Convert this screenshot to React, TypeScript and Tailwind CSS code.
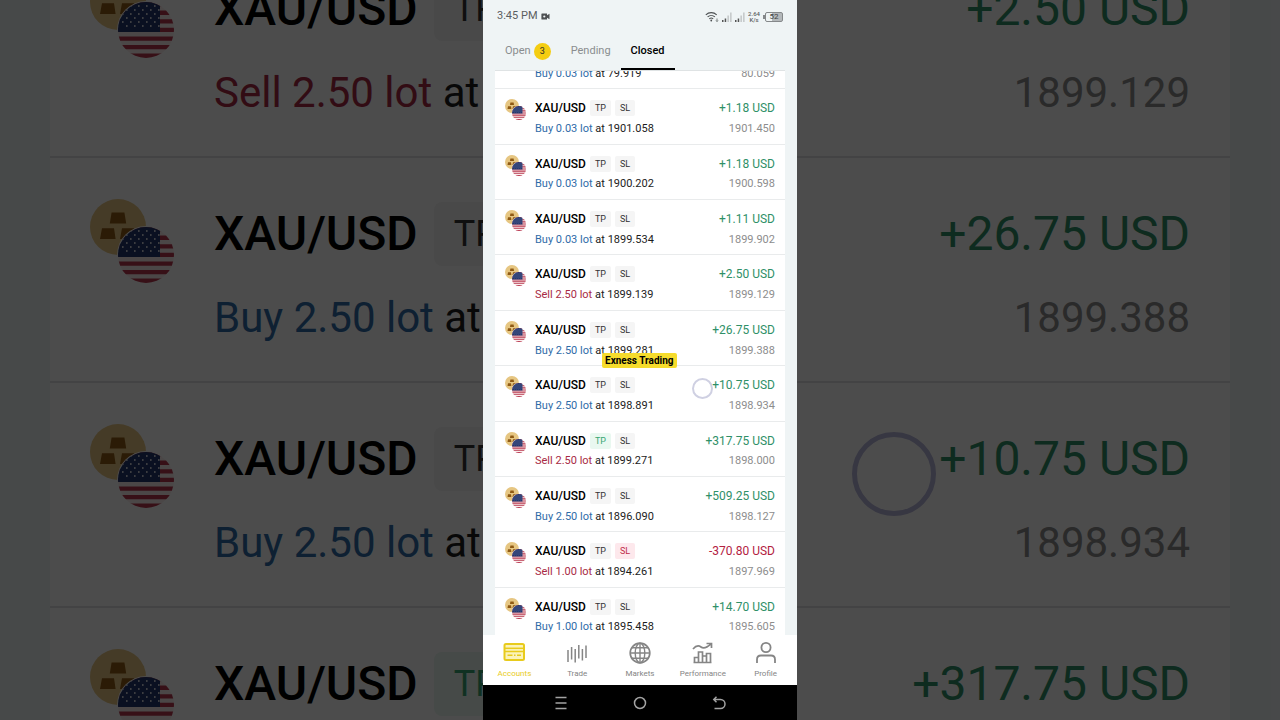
import clsx from 'clsx';

type Side = 'Buy' | 'Sell';

interface Trade {
  pair: string;
  side: Side;
  lot: string;
  open: string;
  close: string;
  profit: string;
  hit?: 'TP' | 'SL';
}

const trades: Trade[] = [
  { pair: 'XAG/USD', side: 'Buy', lot: '0.03', open: '79.919', close: '80.059', profit: '+0.42' },
  { pair: 'XAU/USD', side: 'Buy', lot: '0.03', open: '1901.058', close: '1901.450', profit: '+1.18' },
  { pair: 'XAU/USD', side: 'Buy', lot: '0.03', open: '1900.202', close: '1900.598', profit: '+1.18' },
  { pair: 'XAU/USD', side: 'Buy', lot: '0.03', open: '1899.534', close: '1899.902', profit: '+1.11' },
  { pair: 'XAU/USD', side: 'Sell', lot: '2.50', open: '1899.139', close: '1899.129', profit: '+2.50' },
  { pair: 'XAU/USD', side: 'Buy', lot: '2.50', open: '1899.281', close: '1899.388', profit: '+26.75' },
  { pair: 'XAU/USD', side: 'Buy', lot: '2.50', open: '1898.891', close: '1898.934', profit: '+10.75' },
  { pair: 'XAU/USD', side: 'Sell', lot: '2.50', open: '1899.271', close: '1898.000', profit: '+317.75', hit: 'TP' },
  { pair: 'XAU/USD', side: 'Buy', lot: '2.50', open: '1896.090', close: '1898.127', profit: '+509.25' },
  { pair: 'XAU/USD', side: 'Sell', lot: '1.00', open: '1894.261', close: '1897.969', profit: '-370.80', hit: 'SL' },
  { pair: 'XAU/USD', side: 'Buy', lot: '1.00', open: '1895.458', close: '1895.605', profit: '+14.70' },
];

const sideColor = (side: Side) => (side === 'Buy' ? 'text-[#2f6ba8]' : 'text-[#a82a44]');
const profitColor = (profit: string) => (profit.startsWith('-') ? 'text-[#b3213f]' : 'text-[#2f9068]');

const tagColor = (tag: 'TP' | 'SL', hit?: string) => {
  if (tag !== hit) return 'bg-[#f5f5f5] text-[#333333]';
  return tag === 'TP' ? 'bg-[#e9f8f0] text-[#37a673]' : 'bg-[#fde8ec] text-[#c02c4a]';
};

const PairIcon = ({ className }: { className?: string }) => (
  <svg viewBox="0 0 42 42" className={className} aria-hidden="true">
    <defs>
      <clipPath id="flag-circle">
        <circle cx="28" cy="28" r="14" />
      </clipPath>
    </defs>
    <circle cx="14" cy="14" r="14" fill="#e6c682" />
    <path d="M10.8 6.800h6.400l.9 5.400h-8.200zM6 14.600h6l.8 5.400H5zM16 14.600h6l1 5.400h-8z" fill="#8f5a14" />
    <circle cx="28" cy="28" r="14.5" fill="#fff" />
    <g clipPath="url(#flag-circle)">
      <path d="M14 14h28v28H14z" fill="#fbeeee" />
      <path
        d="M14 14h28v2.15H14zM14 18.3h28v2.15H14zM14 22.6h28v2.15H14zM14 26.9h28v2.15H14zM14 31.2h28v2.15H14zM14 35.5h28v2.15H14zM14 39.8h28V42H14z"
        fill="#b8384f"
      />
      <path d="M14 14h21v15H14z" fill="#24386f" />
      <path
        d="M16 16h19M18 18h17M16 20h19M18 22h17M16 24h19M18 26h17"
        stroke="#fff"
        strokeWidth="0.8"
        strokeDasharray="0.8 3.2"
      />
    </g>
  </svg>
);

const TradeRow = ({ trade }: { trade: Trade }) => (
  <li className="flex items-start gap-[9px] border-b border-[#e9ebec] px-[10px] pt-[10px]">
    <PairIcon className="size-[21px] shrink-0" />
    <div className="grow">
      <div className="flex h-[18px] items-center gap-1">
        <span className="text-xs font-medium text-black">{trade.pair}</span>
        {(['TP', 'SL'] as const).map((tag) => (
          <span
            key={tag}
            className={clsx('rounded-xs px-[5px] text-[9px] leading-4', tagColor(tag, trade.hit))}
          >
            {tag}
          </span>
        ))}
        <span className={clsx('ml-auto text-xs', profitColor(trade.profit))}>{trade.profit} USD</span>
      </div>
      <div className="mt-1 flex h-4 items-center justify-between text-[11px]">
        <span className="text-[#1c1c1c]">
          <span className={sideColor(trade.side)}>
            {trade.side} {trade.lot} lot
          </span>{' '}
          at {trade.open}
        </span>
        <span className="text-[#8d8d8d]">{trade.close}</span>
      </div>
    </div>
  </li>
);

// Enlarged copy of the list that fills the space beside the phone
const BackdropRow = ({ trade }: { trade: Trade }) => (
  <li className="flex h-[225px] items-start gap-10 border-b-2 border-[#dfe2e3] px-10 pt-[41px] whitespace-nowrap">
    <PairIcon className="size-[84px] shrink-0" />
    <div className="grow">
      <div className="flex h-[70px] items-center gap-4 text-5xl">
        <span className="font-medium text-black">{trade.pair}</span>
        {(['TP', 'SL'] as const).map((tag) => (
          <span
            key={tag}
            className={clsx('rounded-lg px-5 text-4xl leading-16', tagColor(tag, trade.hit))}
          >
            {tag}
          </span>
        ))}
        <span className={clsx('ml-auto', profitColor(trade.profit))}>{trade.profit} USD</span>
      </div>
      <div className="mt-4 flex h-16 items-center justify-between text-[42px]">
        <span className="text-[#1c1c1c]">
          <span className={sideColor(trade.side)}>
            {trade.side} {trade.lot} lot
          </span>{' '}
          at {trade.open}
        </span>
        <span className="text-[#8d8d8d]">{trade.close}</span>
      </div>
    </div>
  </li>
);

const Backdrop = () => (
  <div className="absolute inset-0 overflow-hidden bg-[#eff4f5]" aria-hidden="true">
    <ul className="mx-[50px] -mt-[67px] bg-white">
      {trades.slice(4, 8).map((trade) => (
        <BackdropRow key={trade.open} trade={trade} />
      ))}
    </ul>
    <div className="absolute top-[432px] left-[852px] size-[84px] rounded-full border-5 border-[#b9b8dc]" />
    <div className="absolute inset-0 bg-black/70" />
  </div>
);

const SignalIcon = () => (
  <svg viewBox="0 0 10 10" className="size-[10px]" aria-hidden="true">
    <path d="M0 8h1.5v2H0zM2.7 6.5h1.5V10H2.7z" fill="#555" />
    <path d="M5.4 3.5h1.5V10H5.4zM8.1 0.5h1.5V10H8.1z" fill="#c3c7c8" />
  </svg>
);

const StatusBar = () => (
  <div className="flex h-8 items-center px-[14px] pt-px text-[11px] text-[#5b5e60]">
    <span>3:45 PM</span>
    <svg viewBox="0 0 9 7" className="ml-1 h-[7px] w-[9px]" aria-hidden="true">
      <path d="M1 .5h5v1.7L8.5.8v5.4L6 4.8v1.7H1a.6.6 0 0 1-.6-.6V1.1A.6.6 0 0 1 1 .5z" fill="#4d5052" />
      <circle cx="3.3" cy="3.5" r="1.1" fill="#eff4f5" />
    </svg>
    <div className="ml-auto flex items-center gap-[3px]">
      <svg viewBox="0 0 14 11" className="h-[11px] w-[14px]" fill="none" stroke="#4d5052" aria-hidden="true">
        <path
          d="M.8 3.8a8 8 0 0 1 10.9 0M2.6 5.9a5.4 5.4 0 0 1 7.3 0M4.3 7.9a2.9 2.9 0 0 1 3.9 0"
          strokeWidth="1.1"
        />
        <circle cx="6.25" cy="9.5" r="0.9" fill="#4d5052" stroke="none" />
        <path d="M12 7.5v3M11 9.5l1 1 1-1" strokeWidth="0.7" />
      </svg>
      <SignalIcon />
      <SignalIcon />
      <span className="text-center text-[6px] leading-[6px] font-medium">
        2.64
        <br />
        K/s
      </span>
      <span className="flex items-center">
        <span className="h-1 w-[2px] bg-[#85888a]" />
        <span className="flex h-[10px] w-[18px] items-center justify-center rounded-xs border border-[#85888a] bg-linear-to-r from-[#eff4f5] from-40% to-[#b4b8ba] to-40% text-[8px] text-[#3c3f41]">
          52
        </span>
      </span>
    </div>
  </div>
);

const Tabs = () => (
  <div
    role="tablist"
    className="mx-3 flex h-[39px] border-b border-[#dfe3e4] text-[11px] text-[#8a8d8f]"
  >
    <button role="tab" aria-selected="false" className="flex items-center gap-[3px] px-[10px]">
      <span className="pt-px">Open</span>
      <span className="size-[17px] rounded-full bg-[#f4cd12] text-[9px] leading-[17px] text-[#2b2b2b]">3</span>
    </button>
    <button role="tab" aria-selected="false" className="px-[10px] pt-px">
      Pending
    </button>
    <button
      role="tab"
      aria-selected="true"
      className="border-y-2 border-t-transparent border-b-black px-[10px] pt-px font-medium text-black"
    >
      Closed
    </button>
  </div>
);

const AccountsIcon = () => (
  <svg viewBox="0 0 24 24" className="size-6" fill="none" stroke="currentColor" strokeWidth="2" aria-hidden="true">
    <rect x="2.5" y="3" width="19.5" height="16" rx="1.5" fill="#fbf3b8" />
    <path d="M2.500 7.300h19" strokeWidth="1.500" />
    <path d="M2.500 10.500h19" strokeWidth="1.500" />
    <path d="M5.500 14.300h5M12 14.300h1.500M15 14.300h4" strokeWidth="1.600" />
  </svg>
);

const TradeIcon = () => (
  <svg viewBox="0 0 24 24" className="size-6" fill="none" stroke="currentColor" strokeWidth="1.500" aria-hidden="true">
    <path d="M3 9v12M6.600 6v12.500M10.200 8v13.500M13.800 4v13.500M17.400 8v11.500M21 4.500v12.500" />
  </svg>
);

const MarketsIcon = () => (
  <svg viewBox="0 0 24 24" className="size-6" fill="none" stroke="currentColor" strokeWidth="1.400" aria-hidden="true">
    <circle cx="12" cy="12" r="9.800" strokeWidth="1.700" />
    <ellipse cx="12" cy="12" rx="4.800" ry="9.800" />
    <path d="M12 2.200v19.600M2.200 12h19.600M4 6.800h16M4 17.200h16" />
  </svg>
);

const PerformanceIcon = () => (
  <svg viewBox="0 0 24 24" className="size-6" fill="none" stroke="currentColor" strokeWidth="1.700" aria-hidden="true">
    <path d="M2 8c3-3.500 5.500-3.800 8-2s5 1.500 10-3.200M15.500 2.500h5v4.500" />
    <path d="M3.500 21.500v-5h4v5M7.500 21.500V11h4v10.500M11.500 21.500v-6.500h4v6.500M15.500 21.500V12.500h4v9M2.500 21.500h18" />
  </svg>
);

const ProfileIcon = () => (
  <svg viewBox="0 0 24 24" className="size-6" fill="none" stroke="currentColor" strokeWidth="1.800" aria-hidden="true">
    <circle cx="12" cy="6.500" r="4.600" />
    <path d="M3 22v-3.500c0-2.500 1.800-4 4-4h10c2.200 0 4 1.500 4 4V22" />
  </svg>
);

const navItems = [
  { label: 'Accounts', Icon: AccountsIcon, active: true },
  { label: 'Trade', Icon: TradeIcon },
  { label: 'Markets', Icon: MarketsIcon },
  { label: 'Performance', Icon: PerformanceIcon },
  { label: 'Profile', Icon: ProfileIcon },
];

const BottomNav = () => (
  <nav className="grid h-[50px] shrink-0 grid-cols-5 bg-white">
    {navItems.map(({ label, Icon, active }) => (
      <a
        key={label}
        href="#"
        className={clsx(
          'flex flex-col items-center gap-[3px] pt-[6px] text-[8px] leading-3',
          active ? 'text-[#e8cb1c]' : 'text-[#858585]'
        )}
      >
        <Icon />
        {label}
      </a>
    ))}
  </nav>
);

const SystemBar = () => (
  <div className="flex h-[35px] shrink-0 items-center justify-center gap-[63px] bg-black text-[#a3a3a3]">
    <button aria-label="Recent apps">
      <svg viewBox="0 0 16 16" className="size-4" stroke="currentColor" strokeWidth="1.300">
        <path d="M2.500 2.500h11M2.500 8h11M2.500 13.500h11" />
      </svg>
    </button>
    <button aria-label="Home">
      <svg viewBox="0 0 16 16" className="size-4" fill="none" stroke="currentColor" strokeWidth="1.500">
        <circle cx="8" cy="8" r="5.500" />
      </svg>
    </button>
    <button aria-label="Back">
      <svg viewBox="0 0 16 16" className="size-4" fill="none" stroke="currentColor" strokeWidth="1.500">
        <path d="M5.500 1.800L2.800 4.500l2.700 2.700M2.800 4.500h6.700a4.500 4.500 0 0 1 0 9H3.500" />
      </svg>
    </button>
  </div>
);

export default function App() {
  return (
    <div className="relative h-screen overflow-hidden font-[Roboto,sans-serif]">
      <Backdrop />
      <main className="relative mx-auto flex h-full w-[314px] flex-col bg-[#eff4f5]">
        <StatusBar />
        <Tabs />
        <div className="mx-3 grow basis-0 overflow-hidden">
          {/* list is scrolled part of the way through a row */}
          <ul className="-mt-[37px] grid h-[609px] auto-rows-fr bg-white">
            {trades.map((trade) => (
              <TradeRow key={trade.open} trade={trade} />
            ))}
          </ul>
        </div>
        <BottomNav />
        <SystemBar />
        <span className="absolute top-[353px] left-[119px] rounded-xs bg-[#f6dc2c] px-[3px] text-[10px] leading-[15px] font-bold text-black">
          Exness Trading
        </span>
        <span className="absolute top-[378px] left-[209px] size-[21px] rounded-full border-2 border-[#cfd0e2]" />
      </main>
    </div>
  );
}
